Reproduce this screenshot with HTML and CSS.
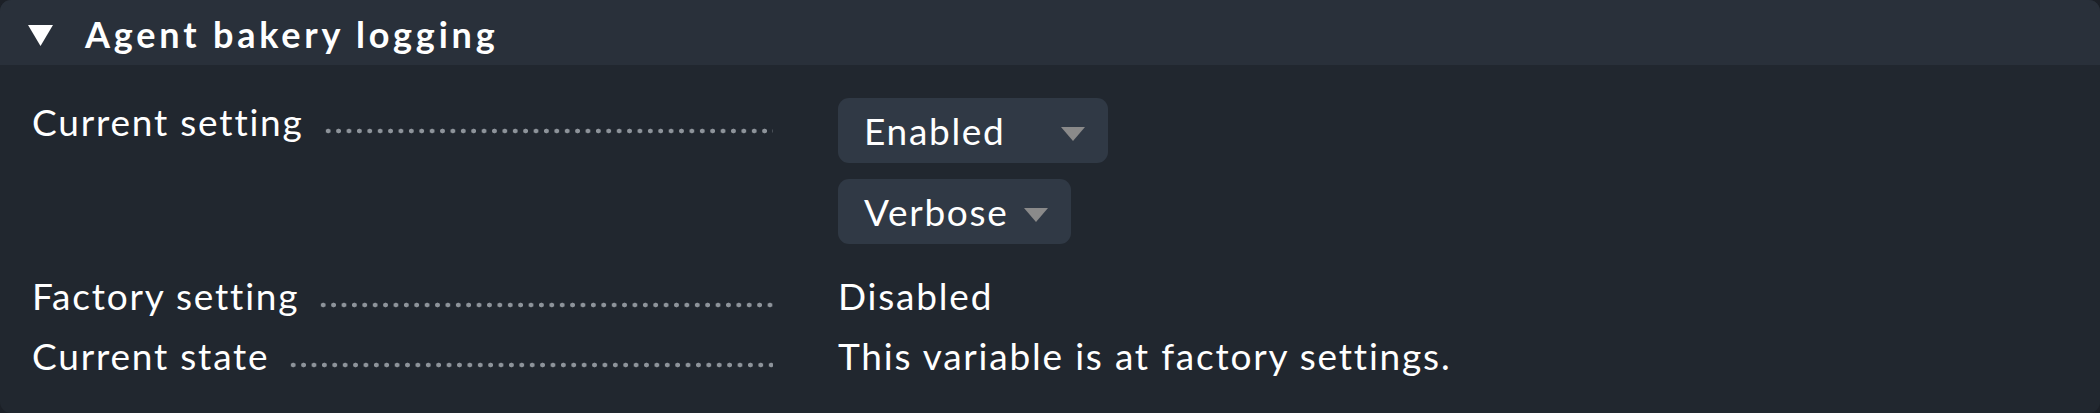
FILE: index.html
```html
<!DOCTYPE html>
<html>
<head>
<meta charset="utf-8">
<link rel="stylesheet" href="styles.css">
</head>
<body>
<div class="panel">
  <div class="header">
    <svg class="toggle" width="25" height="21" viewBox="0 0 25 21"><polygon points="0,0 25,0 12.5,21" fill="#ffffff"/></svg>
    <span class="title">Agent bakery logging</span>
  </div>
  <div class="content">
    <div class="row first">
      <div class="label"><span class="ltext">Current setting</span><span class="dots"></span></div>
      <div class="value stack">
        <div class="select wide"><span class="stext">Enabled</span><span class="arrow"></span></div>
        <div class="select"><span class="stext">Verbose</span><span class="arrow"></span></div>
      </div>
    </div>
    <div class="row">
      <div class="label"><span class="ltext">Factory setting</span><span class="dots"></span></div>
      <div class="value text">Disabled</div>
    </div>
    <div class="row">
      <div class="label"><span class="ltext">Current state</span><span class="dots"></span></div>
      <div class="value text">This variable is at factory settings.</div>
    </div>
  </div>
</div>
</body>
</html>
```
FILE: styles.css
```css
html, body {
  margin: 0;
  padding: 0;
  background: #1c2027;
}
body {
  width: 2100px;
  height: 413px;
  font-family: Lato, "Open Sans", sans-serif;
  color: #ffffff;
}
.panel {
  height: 413px;
  background: #21272f;
  border-radius: 11px;
  overflow: hidden;
  display: flex;
  flex-direction: column;
}
.header {
  height: 65px;
  background: #29303a;
  display: flex;
  align-items: center;
  padding-left: 28px;
  box-sizing: border-box;
}
.toggle {
  display: block;
  margin-top: 5px;
}
.title {
  margin-left: 32px;
  font-weight: 700;
  font-size: 36px;
  letter-spacing: 3.8px;
  line-height: 65px;
  padding-top: 3px;
}
.content {
  padding: 33px 0 0 32px;
  display: flex;
  flex-direction: column;
  gap: 12px;
}
.row {
  display: flex;
  align-items: flex-start;
}
.row.first {
  margin-bottom: 16px;
}
.label {
  width: 741px;
  display: flex;
  align-items: flex-start;
  font-size: 37px;
  line-height: 48px;
  letter-spacing: 1.8px;
  flex: none;
}
.ltext {
  white-space: nowrap;
}
.dots {
  flex: 1;
  height: 6px;
  margin-top: 30px;
  margin-left: 19px;
  background-image: radial-gradient(circle at center, #8d939a 2.1px, transparent 2.7px);
  background-size: 10.4px 6px;
  background-repeat: repeat-x;
}
.value {
  margin-left: 65px;
}
.text {
  font-size: 37px;
  line-height: 48px;
  letter-spacing: 1.8px;
}
.row + .row .label,
.row + .row .text {
  line-height: 48px;
}
.stack {
  display: flex;
  flex-direction: column;
  align-items: flex-start;
  gap: 16px;
}
.select {
  height: 65px;
  box-sizing: border-box;
  background: #303945;
  border-radius: 11px;
  display: flex;
  align-items: center;
  padding: 0 23px 0 26px;
  font-size: 37px;
  letter-spacing: 1.7px;
}
.select.wide {
  width: 270px;
  justify-content: space-between;
}
.stext {
  line-height: 65px;
}
.arrow {
  width: 0;
  height: 0;
  border-left: 12px solid transparent;
  border-right: 12px solid transparent;
  border-top: 14px solid #8a8a8a;
  margin-left: 16px;
  margin-top: 6px;
}
```
